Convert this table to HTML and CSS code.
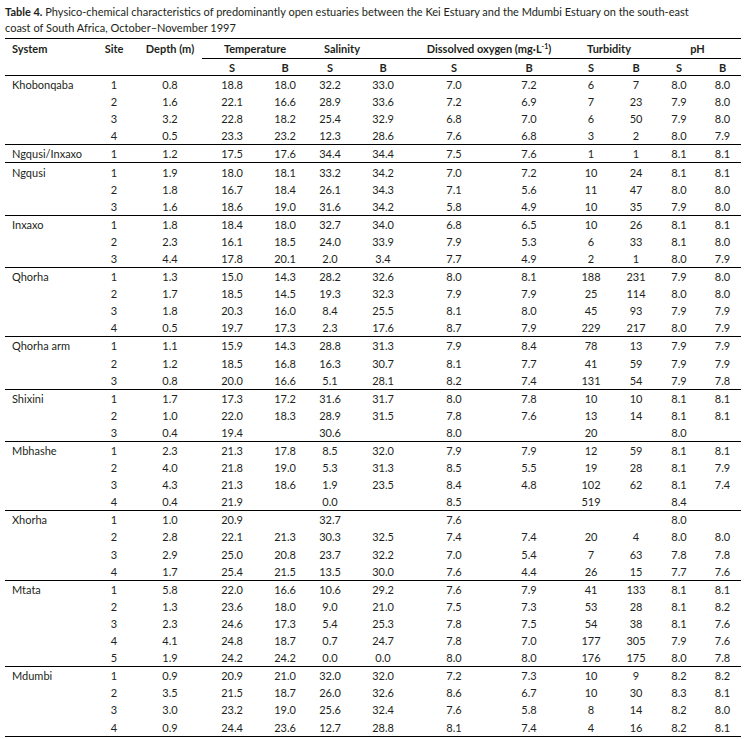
FILE: index.html
```html
<!DOCTYPE html>
<html lang="en">
<head>
<meta charset="utf-8">
<title>Table 4</title>
<link rel="stylesheet" href="styles.css">
</head>
<body>
<div class="page">
  <p class="caption"><b>Table 4.</b> Physico-chemical characteristics of predominantly open estuaries between the Kei Estuary and the Mdumbi Estuary on the south-east<br>coast of South Africa, October–November 1997</p>
  <table class="data">
    <colgroup>
      <col class="c-sys"><col class="c-site"><col class="c-depth">
      <col class="c-ts"><col class="c-tb"><col class="c-ss"><col class="c-sb">
      <col class="c-ds"><col class="c-db"><col class="c-us"><col class="c-ub">
      <col class="c-ps"><col class="c-pb">
    </colgroup>
    <thead>
      <tr class="h1">
        <th class="sys">System</th><th>Site</th><th>Depth (m)</th>
        <th colspan="2" class="span">Temperature</th>
        <th colspan="2" class="span sal">Salinity</th>
        <th colspan="2" class="span">Dissolved oxygen (mg·L<sup>-1</sup>)</th>
        <th colspan="2" class="span">Turbidity</th>
        <th colspan="2" class="span">pH</th>
      </tr>
      <tr class="h2">
        <th></th><th></th><th></th>
        <th>S</th><th>B</th><th>S</th><th>B</th><th>S</th><th>B</th><th>S</th><th>B</th><th>S</th><th>B</th>
      </tr>
    </thead>
    <tbody>
      <tr><td class="sys">Khobonqaba</td><td>1</td><td>0.8</td><td>18.8</td><td>18.0</td><td>32.2</td><td>33.0</td><td>7.0</td><td>7.2</td><td>6</td><td>7</td><td>8.0</td><td>8.0</td></tr>
      <tr><td></td><td>2</td><td>1.6</td><td>22.1</td><td>16.6</td><td>28.9</td><td>33.6</td><td>7.2</td><td>6.9</td><td>7</td><td>23</td><td>7.9</td><td>8.0</td></tr>
      <tr><td></td><td>3</td><td>3.2</td><td>22.8</td><td>18.2</td><td>25.4</td><td>32.9</td><td>6.8</td><td>7.0</td><td>6</td><td>50</td><td>7.9</td><td>8.0</td></tr>
      <tr class="end"><td></td><td>4</td><td>0.5</td><td>23.3</td><td>23.2</td><td>12.3</td><td>28.6</td><td>7.6</td><td>6.8</td><td>3</td><td>2</td><td>8.0</td><td>7.9</td></tr>

      <tr class="end"><td class="sys">Ngqusi/Inxaxo</td><td>1</td><td>1.2</td><td>17.5</td><td>17.6</td><td>34.4</td><td>34.4</td><td>7.5</td><td>7.6</td><td>1</td><td>1</td><td>8.1</td><td>8.1</td></tr>

      <tr><td class="sys">Ngqusi</td><td>1</td><td>1.9</td><td>18.0</td><td>18.1</td><td>33.2</td><td>34.2</td><td>7.0</td><td>7.2</td><td>10</td><td>24</td><td>8.1</td><td>8.1</td></tr>
      <tr><td></td><td>2</td><td>1.8</td><td>16.7</td><td>18.4</td><td>26.1</td><td>34.3</td><td>7.1</td><td>5.6</td><td>11</td><td>47</td><td>8.0</td><td>8.0</td></tr>
      <tr class="end"><td></td><td>3</td><td>1.6</td><td>18.6</td><td>19.0</td><td>31.6</td><td>34.2</td><td>5.8</td><td>4.9</td><td>10</td><td>35</td><td>7.9</td><td>8.0</td></tr>

      <tr><td class="sys">Inxaxo</td><td>1</td><td>1.8</td><td>18.4</td><td>18.0</td><td>32.7</td><td>34.0</td><td>6.8</td><td>6.5</td><td>10</td><td>26</td><td>8.1</td><td>8.1</td></tr>
      <tr><td></td><td>2</td><td>2.3</td><td>16.1</td><td>18.5</td><td>24.0</td><td>33.9</td><td>7.9</td><td>5.3</td><td>6</td><td>33</td><td>8.1</td><td>8.0</td></tr>
      <tr class="end"><td></td><td>3</td><td>4.4</td><td>17.8</td><td>20.1</td><td>2.0</td><td>3.4</td><td>7.7</td><td>4.9</td><td>2</td><td>1</td><td>8.0</td><td>7.9</td></tr>

      <tr><td class="sys">Qhorha</td><td>1</td><td>1.3</td><td>15.0</td><td>14.3</td><td>28.2</td><td>32.6</td><td>8.0</td><td>8.1</td><td>188</td><td>231</td><td>7.9</td><td>8.0</td></tr>
      <tr><td></td><td>2</td><td>1.7</td><td>18.5</td><td>14.5</td><td>19.3</td><td>32.3</td><td>7.9</td><td>7.9</td><td>25</td><td>114</td><td>8.0</td><td>8.0</td></tr>
      <tr><td></td><td>3</td><td>1.8</td><td>20.3</td><td>16.0</td><td>8.4</td><td>25.5</td><td>8.1</td><td>8.0</td><td>45</td><td>93</td><td>7.9</td><td>7.9</td></tr>
      <tr class="end"><td></td><td>4</td><td>0.5</td><td>19.7</td><td>17.3</td><td>2.3</td><td>17.6</td><td>8.7</td><td>7.9</td><td>229</td><td>217</td><td>8.0</td><td>7.9</td></tr>

      <tr><td class="sys">Qhorha arm</td><td>1</td><td>1.1</td><td>15.9</td><td>14.3</td><td>28.8</td><td>31.3</td><td>7.9</td><td>8.4</td><td>78</td><td>13</td><td>7.9</td><td>7.9</td></tr>
      <tr><td></td><td>2</td><td>1.2</td><td>18.5</td><td>16.8</td><td>16.3</td><td>30.7</td><td>8.1</td><td>7.7</td><td>41</td><td>59</td><td>7.9</td><td>7.9</td></tr>
      <tr class="end"><td></td><td>3</td><td>0.8</td><td>20.0</td><td>16.6</td><td>5.1</td><td>28.1</td><td>8.2</td><td>7.4</td><td>131</td><td>54</td><td>7.9</td><td>7.8</td></tr>

      <tr><td class="sys">Shixini</td><td>1</td><td>1.7</td><td>17.3</td><td>17.2</td><td>31.6</td><td>31.7</td><td>8.0</td><td>7.8</td><td>10</td><td>10</td><td>8.1</td><td>8.1</td></tr>
      <tr><td></td><td>2</td><td>1.0</td><td>22.0</td><td>18.3</td><td>28.9</td><td>31.5</td><td>7.8</td><td>7.6</td><td>13</td><td>14</td><td>8.1</td><td>8.1</td></tr>
      <tr class="end"><td></td><td>3</td><td>0.4</td><td>19.4</td><td></td><td>30.6</td><td></td><td>8.0</td><td></td><td>20</td><td></td><td>8.0</td><td></td></tr>

      <tr><td class="sys">Mbhashe</td><td>1</td><td>2.3</td><td>21.3</td><td>17.8</td><td>8.5</td><td>32.0</td><td>7.9</td><td>7.9</td><td>12</td><td>59</td><td>8.1</td><td>8.1</td></tr>
      <tr><td></td><td>2</td><td>4.0</td><td>21.8</td><td>19.0</td><td>5.3</td><td>31.3</td><td>8.5</td><td>5.5</td><td>19</td><td>28</td><td>8.1</td><td>7.9</td></tr>
      <tr><td></td><td>3</td><td>4.3</td><td>21.3</td><td>18.6</td><td>1.9</td><td>23.5</td><td>8.4</td><td>4.8</td><td>102</td><td>62</td><td>8.1</td><td>7.4</td></tr>
      <tr class="end"><td></td><td>4</td><td>0.4</td><td>21.9</td><td></td><td>0.0</td><td></td><td>8.5</td><td></td><td>519</td><td></td><td>8.4</td><td></td></tr>

      <tr><td class="sys">Xhorha</td><td>1</td><td>1.0</td><td>20.9</td><td></td><td>32.7</td><td></td><td>7.6</td><td></td><td></td><td></td><td>8.0</td><td></td></tr>
      <tr><td></td><td>2</td><td>2.8</td><td>22.1</td><td>21.3</td><td>30.3</td><td>32.5</td><td>7.4</td><td>7.4</td><td>20</td><td>4</td><td>8.0</td><td>8.0</td></tr>
      <tr><td></td><td>3</td><td>2.9</td><td>25.0</td><td>20.8</td><td>23.7</td><td>32.2</td><td>7.0</td><td>5.4</td><td>7</td><td>63</td><td>7.8</td><td>7.8</td></tr>
      <tr class="end"><td></td><td>4</td><td>1.7</td><td>25.4</td><td>21.5</td><td>13.5</td><td>30.0</td><td>7.6</td><td>4.4</td><td>26</td><td>15</td><td>7.7</td><td>7.6</td></tr>

      <tr><td class="sys">Mtata</td><td>1</td><td>5.8</td><td>22.0</td><td>16.6</td><td>10.6</td><td>29.2</td><td>7.6</td><td>7.9</td><td>41</td><td>133</td><td>8.1</td><td>8.1</td></tr>
      <tr><td></td><td>2</td><td>1.3</td><td>23.6</td><td>18.0</td><td>9.0</td><td>21.0</td><td>7.5</td><td>7.3</td><td>53</td><td>28</td><td>8.1</td><td>8.2</td></tr>
      <tr><td></td><td>3</td><td>2.3</td><td>24.6</td><td>17.3</td><td>5.4</td><td>25.3</td><td>7.8</td><td>7.5</td><td>54</td><td>38</td><td>8.1</td><td>7.6</td></tr>
      <tr><td></td><td>4</td><td>4.1</td><td>24.8</td><td>18.7</td><td>0.7</td><td>24.7</td><td>7.8</td><td>7.0</td><td>177</td><td>305</td><td>7.9</td><td>7.6</td></tr>
      <tr class="end"><td></td><td>5</td><td>1.9</td><td>24.2</td><td>24.2</td><td>0.0</td><td>0.0</td><td>8.0</td><td>8.0</td><td>176</td><td>175</td><td>8.0</td><td>7.8</td></tr>

      <tr><td class="sys">Mdumbi</td><td>1</td><td>0.9</td><td>20.9</td><td>21.0</td><td>32.0</td><td>32.0</td><td>7.2</td><td>7.3</td><td>10</td><td>9</td><td>8.2</td><td>8.2</td></tr>
      <tr><td></td><td>2</td><td>3.5</td><td>21.5</td><td>18.7</td><td>26.0</td><td>32.6</td><td>8.6</td><td>6.7</td><td>10</td><td>30</td><td>8.3</td><td>8.1</td></tr>
      <tr><td></td><td>3</td><td>3.0</td><td>23.2</td><td>19.0</td><td>25.6</td><td>32.4</td><td>7.6</td><td>5.8</td><td>8</td><td>14</td><td>8.2</td><td>8.0</td></tr>
      <tr class="end"><td></td><td>4</td><td>0.9</td><td>24.4</td><td>23.6</td><td>12.7</td><td>28.8</td><td>8.1</td><td>7.4</td><td>4</td><td>16</td><td>8.2</td><td>8.1</td></tr>
    </tbody>
  </table>
</div>
</body>
</html>
```

FILE: styles.css
```css
html, body {
  margin: 0;
  padding: 0;
  background: #ffffff;
}

body {
  font-family: Lato, "Open Sans", "Liberation Sans", sans-serif;
  color: #231f20;
}

.page {
  width: 736px;
  padding: 4px 0 0 5px;
}

.caption {
  margin: 0;
  font-size: 11px;
  line-height: 16px;
  white-space: nowrap;
}

.caption b {
  font-weight: 700;
}

.data {
  margin-top: 2px;
  width: 736px;
  border-collapse: collapse;
  table-layout: fixed;
  font-size: 11px;
  border-top: 1px solid #000;
  border-bottom: 1px solid #000;
}

.c-sys { width: 85px; }
.c-site { width: 48px; }
.c-depth { width: 64px; }
.c-ts { width: 60px; }
.c-tb { width: 46px; }
.c-ss { width: 44px; }
.c-sb { width: 62px; }
.c-ds { width: 80px; }
.c-db { width: 70px; }
.c-us { width: 54px; }
.c-ub { width: 36px; }
.c-ps { width: 50px; }
.c-pb { width: 37px; }

th, td {
  padding: 0;
  text-align: center;
  vertical-align: middle;
  white-space: nowrap;
}

th {
  font-weight: 700;
}

th.sys, td.sys {
  text-align: left;
  padding-left: 7px;
}

.h1 th {
  height: 19px;
}

.h1 th.span {
  border-bottom: 1px solid #000;
}

.h1 th.sal {
  padding-right: 38px;
}

.h2 th {
  height: 16px;
  border-bottom: 1px solid #000;
}

sup {
  font-size: 7px;
  line-height: 0;
  vertical-align: 4px;
}

tbody td {
  height: 17.1px;
  line-height: 17px;
}

tbody tr.end td {
  border-bottom: 1px solid #000;
}
```
